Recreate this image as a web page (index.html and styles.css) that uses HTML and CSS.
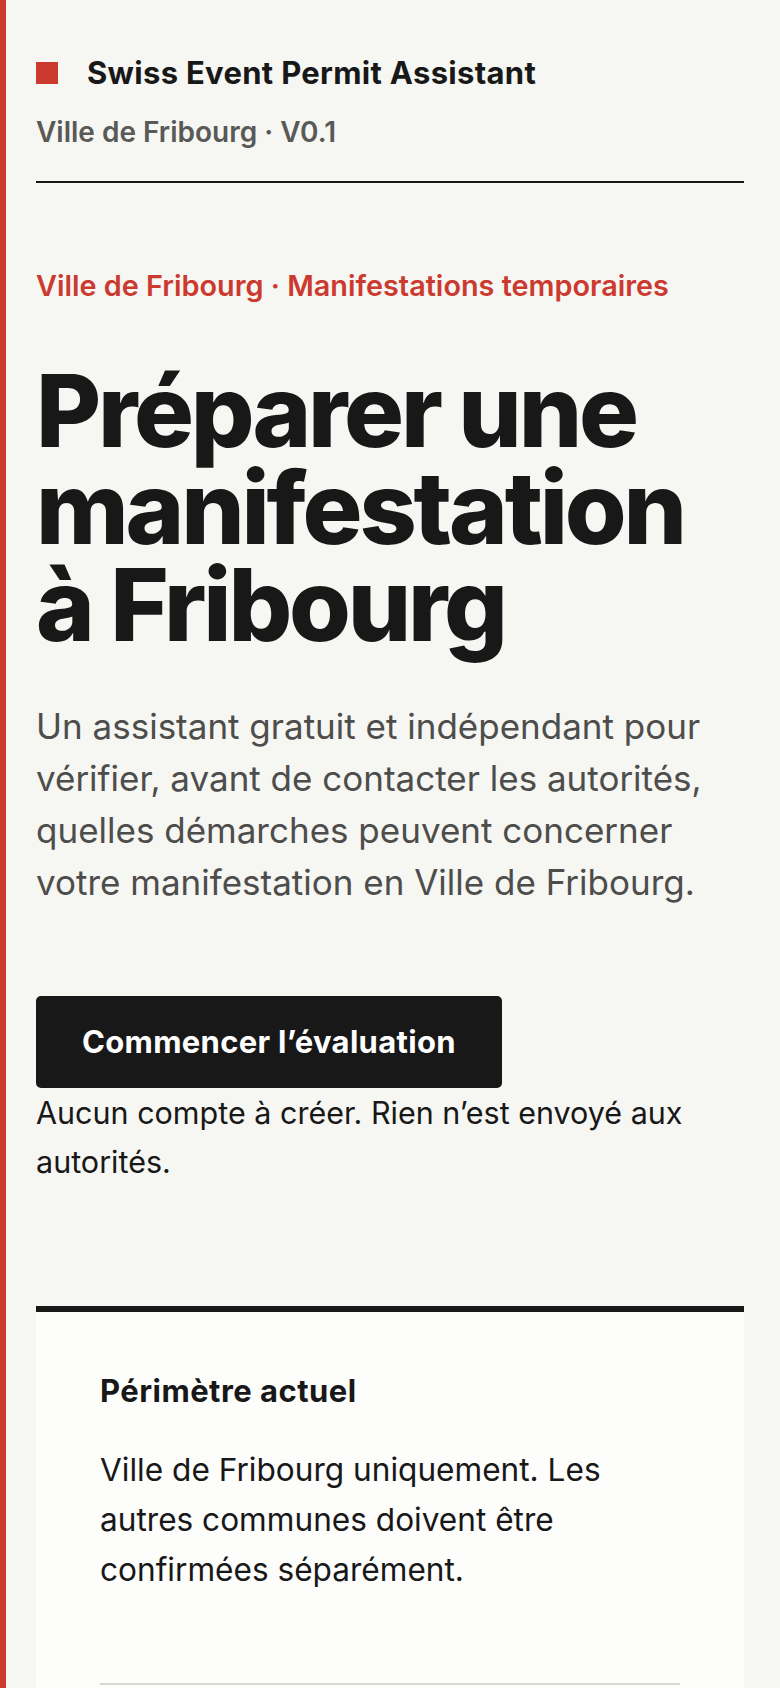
FILE: index.html
```html
<!DOCTYPE html>
<html lang="fr">
<head>
  <meta charset="UTF-8" />
  <title>Swiss Event Permit Assistant</title>
  <link rel="stylesheet" href="styles.css">
</head>
<body>

<div class="page">

  <header class="site-header">
    <div class="brand">
      <span class="brand-mark"></span>
      <span class="brand-name">Swiss Event Permit Assistant</span>
    </div>
    <p class="brand-sub">Ville de Fribourg · V0.1</p>
  </header>

  <!-- Intro -->
  <section class="hero">
    <p class="eyebrow">Ville de Fribourg · Manifestations temporaires</p>
    <h1>Préparer une manifestation à Fribourg</h1>
    <p class="lead">Un assistant gratuit et indépendant pour vérifier, avant de contacter les autorités, quelles démarches peuvent concerner votre manifestation en Ville de Fribourg.</p>
    <a href="#" class="btn">Commencer l’évaluation</a>
    <p class="note">Aucun compte à créer. Rien n’est envoyé aux autorités.</p>
  </section>

  <!-- Périmètre -->
  <section class="card">
    <h2>Périmètre actuel</h2>
    <p>Ville de Fribourg uniquement. Les autres communes doivent être confirmées séparément.</p>
    <div class="card-foot"></div>
  </section>

</div>

</body>
</html>
```

FILE: styles.css
```css
body { margin: 0; background: #f6f6f2; color: #181818; font-family: 'Inter', 'Noto Sans', sans-serif; }
.page { border-left: 6px solid #cc3a2f; padding: 55px 36px 0 30px; min-height: 100vh; box-sizing: border-box; }

.site-header { border-bottom: 2px solid #181818; padding-bottom: 31px; }
.brand { display: flex; align-items: center; gap: 29px; }
.brand-mark { width: 22px; height: 22px; background: #cc3a2f; flex: none; }
.brand-name { font-size: 31px; line-height: 36px; font-weight: 700; letter-spacing: 0.01em; }
.brand-sub { margin: 23px 0 0; font-size: 28px; line-height: 36px; font-weight: 600; color: #595957; }

.hero { padding-top: 85px; }
.eyebrow { margin: 0; font-size: 28.8px; line-height: 36px; font-weight: 600; color: #cc3a2f; }
.hero h1 { margin: 58px 0 0; font-size: 100px; line-height: 97px; font-weight: 800; letter-spacing: -0.032em; }
.lead { margin: 47px 0 0; font-size: 35px; line-height: 52px; color: #4d4d4b; }
.btn { display: inline-block; margin-top: 88px; padding: 28px 46px; font-size: 31px; line-height: 36px; font-weight: 700; letter-spacing: 0.01em; color: #fff; background: #181818; border-radius: 5px; text-decoration: none; }
.note { margin: 0; font-size: 30.5px; line-height: 49px; }

.card { margin-top: 120px; background: #fdfdfc; border-top: 6px solid #181818; padding: 61px 64px 0; }
.card h2 { margin: 0; font-size: 31px; line-height: 36px; font-weight: 700; letter-spacing: 0.015em; }
.card p { margin: 36px 0 0; font-size: 31.6px; line-height: 50px; }
.card-foot { margin-top: 88px; border-top: 2px solid #d8d8d2; height: 40px; }
```
